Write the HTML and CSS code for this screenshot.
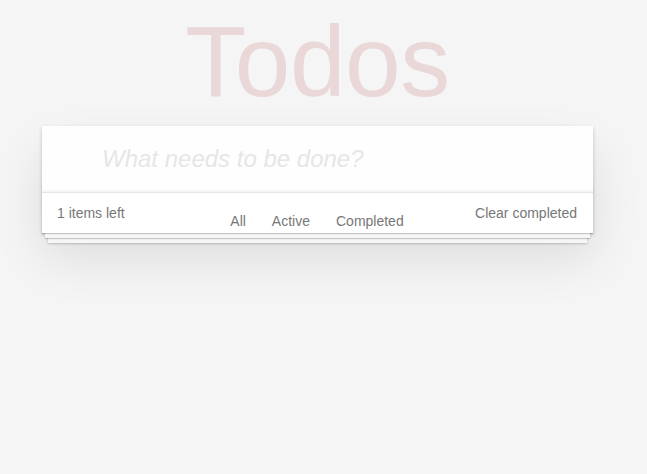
FILE: index.html
```html
<!DOCTYPE html>
<html lang="en">
<head>
<meta charset="utf-8">
<title>Todos</title>
<link rel="stylesheet" href="styles.css">
</head>
<body>
<section class="app">
  <h1 class="title">Todos</h1>
  <div class="card">
    <input class="new-todo" type="text" placeholder="What needs to be done?">
    <footer class="footer">
      <span class="count">1 items left</span>
      <nav class="filters">
        <span class="filter">All</span>
        <span class="filter">Active</span>
        <span class="filter">Completed</span>
      </nav>
      <span class="clear">Clear completed</span>
    </footer>
  </div>
</section>
</body>
</html>
```

FILE: styles.css
```css
html, body {
  margin: 0;
  padding: 0;
}
html {
  height: 100%;
}
body {
  min-height: 100%;
  background: #f5f5f5;
  font-family: "Liberation Sans", Arial, sans-serif;
  font-size: 14px;
  color: #777;
}
.app {
  width: 551px;
  margin-left: 42px;
  padding-bottom: 40px;
}
.title {
  margin: 4px 0 7px;
  font-size: 100px;
  line-height: 115px;
  font-weight: 400;
  text-align: center;
  color: rgba(175, 47, 47, 0.15);
  letter-spacing: -0.5px;
}
.card {
  background: #fff;
  box-shadow: 0 2px 4px 0 rgba(0, 0, 0, 0.2), 0 25px 50px 0 rgba(0, 0, 0, 0.1);
}
.new-todo {
  display: block;
  box-sizing: border-box;
  width: 100%;
  margin: 0;
  border: 0;
  outline: none;
  padding: 16px 16px 16px 60px;
  font-family: inherit;
  font-size: 24px;
  line-height: 1.4em;
  height: 65.6px;
  color: #4d4d4d;
  background: rgba(0, 0, 0, 0.003);
  box-shadow: inset 0 -2px 1px rgba(0, 0, 0, 0.03);
}
.new-todo::placeholder {
  font-style: italic;
  color: #e6e6e6;
}
.footer {
  position: relative;
  display: grid;
  grid-template-columns: 1fr auto 1fr;
  grid-template-rows: 20px;
  padding: 10px 16px 10px 15px;
  border-top: 1px solid #e6e6e6;
  line-height: 20px;
}
.footer::before {
  content: "";
  position: absolute;
  right: 0;
  bottom: 0;
  left: 0;
  height: 50px;
  overflow: hidden;
  box-shadow: 0 1px 1px rgba(0, 0, 0, 0.2),
              0 8px 0 -3px #f6f6f6,
              0 9px 1px -3px rgba(0, 0, 0, 0.2),
              0 16px 0 -6px #f6f6f6,
              0 17px 2px -6px rgba(0, 0, 0, 0.2);
}
.count {
  justify-self: start;
  position: relative;
}
.filters {
  display: flex;
  gap: 26px;
  padding-top: 8px;
  position: relative;
}
.clear {
  justify-self: end;
  position: relative;
}
```
